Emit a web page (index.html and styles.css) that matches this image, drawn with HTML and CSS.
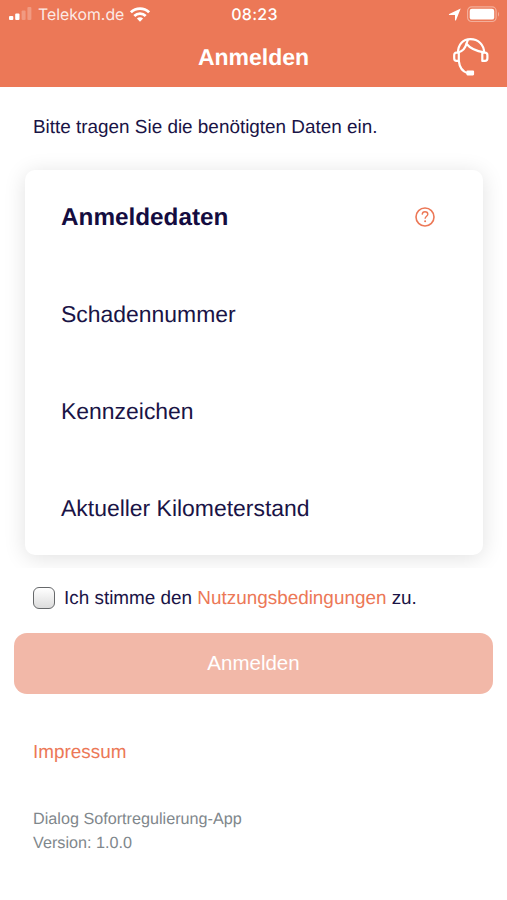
FILE: index.html
```html
<!DOCTYPE html>
<html lang="de">
<head>
    <meta charset="UTF-8">
    <meta name="viewport" content="width=device-width, initial-scale=1">
    <title>Anmelden</title>
    <link rel="stylesheet" href="styles.css">
</head>
<body>
    <header class="header">
        <div class="status">
            <div class="status-left">
                <svg class="signal" width="23" height="14" viewBox="0 0 23 14" fill="#fff">
                    <rect x="0" y="9" width="4.3" height="4" rx="1"/>
                    <rect x="6.2" y="6.5" width="4.3" height="6.5" rx="1"/>
                    <rect x="12.6" y="3.5" width="4" height="9.5" rx="1" opacity=".25"/>
                    <rect x="18.4" y="0" width="4" height="13" rx="1" opacity=".25"/>
                </svg>
                <span class="carrier">Telekom.de</span>
                <svg width="20" height="15" viewBox="0 0 20 15" fill="none" stroke="#fff" stroke-width="2.8">
                    <path d="M.9 5.3a13 13 0 0 1 18.2 0"/>
                    <path d="M4.3 8.9a8.2 8.2 0 0 1 11.4 0"/>
                    <path d="M10 14.7l-3.1-3.2a4.4 4.4 0 0 1 6.2 0z" fill="#fff" stroke="none"/>
                </svg>
            </div>
            <div class="time">08:23</div>
            <div class="status-right">
                <svg width="13" height="13" viewBox="0 0 13 13" fill="#fff">
                    <path d="M12.7.6L8 12.2c-.2.5-1 .4-1-.2V7H1.4C.8 7 .7 6.3 1.2 6z"/>
                </svg>
                <svg width="33" height="17" viewBox="0 0 33 17" fill="none">
                    <rect x=".6" y=".9" width="28.5" height="14.6" rx="4" stroke="#fff" stroke-opacity=".4" stroke-width="1.2"/>
                    <rect x="2.7" y="2.8" width="24.5" height="10.8" rx="2.2" fill="#fff"/>
                    <path d="M31 6v4.6c1.4-.6 1.4-4 0-4.6z" fill="#fff" fill-opacity=".4"/>
                </svg>
            </div>
        </div>
        <div class="navbar">
            <h1 class="title">Anmelden</h1>
            <svg class="support" width="36" height="40" viewBox="0 0 36 40" fill="none" stroke="#fff" stroke-width="2.2" stroke-linejoin="round">
                <path d="M5 16C5 7 10.2 2.2 17.5 2.2S31 7 31.2 16"/>
                <path d="M5.2 15.5c4-1.2 7.2-4.2 8.2-8.7 3.3 4 8.8 7.3 17.6 8.6"/>
                <path d="M13.4 6.8l1.5-4"/>
                <path d="M5.8 15.7H3.5c-1.7 0-2.3 1-2.3 2.5v3c0 1.7.8 2.7 2.4 2.7h2.2z"/>
                <path d="M29.3 15.7h2.5c1.8 0 2.6 1 2.6 2.5v3c0 1.7-.9 2.7-2.5 2.7h-2.6z"/>
                <path d="M5.8 23.9c.7 6.5 3.7 10.8 8.9 12.3"/>
                <path d="M14.5 34.5h5.5v2.8h-5.5z" fill="#fff"/>
            </svg>
        </div>
    </header>

    <main class="content">
        <div class="form-area">
            <p class="intro">Bitte tragen Sie die benötigten Daten ein.</p>
            <section class="card">
                <div class="card-head">
                    <h2 class="card-title">Anmeldedaten</h2>
                    <svg width="20" height="20" viewBox="0 0 20 20" fill="none" stroke="#ec7857" stroke-width="1.6">
                        <circle cx="10" cy="10" r="9"/>
                        <path d="M7.2 7.6C7.3 5.7 8.4 4.8 10 4.8s2.8 1 2.8 2.4c0 2-2.7 2.2-2.7 4.6" stroke-width="1.4"/>
                        <circle cx="10.1" cy="14.3" r="1" fill="#ec7857" stroke="none"/>
                    </svg>
                </div>
                <div class="field">Schadennummer</div>
                <div class="field">Kennzeichen</div>
                <div class="field">Aktueller Kilometerstand</div>
            </section>
        </div>

        <div class="agree">
            <input class="check" type="checkbox" id="agree">
            <label class="agree-text" for="agree">Ich stimme den <a class="link" href="#">Nutzungsbedingungen</a> zu.</label>
        </div>
        <button class="submit" type="button">Anmelden</button>

        <footer class="footer">
            <a class="link" href="#">Impressum</a>
            <div class="version">
                Dialog Sofortregulierung-App<br>
                Version: 1.0.0
            </div>
        </footer>
    </main>
</body>
</html>
```
FILE: styles.css
```css
* {box-sizing: border-box;}
body {
    margin: 0;
    min-height: 900px;
    background: #fff;
    color: #1a1446;
    font-family: "Liberation Sans", Arial, sans-serif;
    font-size: 18.9px;
    text-rendering: geometricPrecision;
}
svg {
    display: block;
    flex: none;
}
.header {
    height: 87px;
    background: #ec7857;
    color: #fff;
}
.status {
    display: grid;
    grid-template-columns: 1fr auto 1fr;
    align-items: center;
    height: 28px;
    padding: 0 7px 0 9px;
    font-family: Inter, sans-serif;
    font-size: 16px;
}
.status-left, .status-right {
    display: flex;
    align-items: center;
}
.status-left {
    gap: 6px;
}
.carrier {
    font-size: 15.8px;
    opacity: .85;
}
.time {
    font-weight: 500;
    letter-spacing: .3px;
}
.status-right {
    justify-content: flex-end;
    gap: 6px;
}
.navbar {
    display: grid;
    grid-template-columns: 1fr auto 1fr;
    align-items: center;
    height: 57px;
    padding: 0 18px;
}
.title {
    grid-column: 2;
    margin: 0;
    padding-top: 2px;
    font-size: 23px;
    line-height: 55px;
}
.support {
    justify-self: end;
}

.form-area {
    height: 481px;
    padding: 29px 24px 0 25px;
    overflow: hidden;
}
.intro {
    margin: 0 0 30px 8px;
    line-height: 24px;
}
.card {
    height: 385px;
    padding: 23px 36px 0;
    border-radius: 10px;
    background: #fff;
    box-shadow: 0 3px 22px rgba(0, 0, 0, .12);
}
.card-head {
    display: flex;
    align-items: center;
    justify-content: space-between;
    height: 48px;
    padding-right: 12px;
}
.card-title {
    margin: 0;
    padding-top: 2px;
    color: #140c40;
    font-size: 24.3px;
}
.field {
    height: 97px;
    padding-top: 34px;
    font-size: 22.95px;
    line-height: 78px;
}

.agree {
    display: flex;
    align-items: center;
    gap: 9px;
    height: 60px;
    padding-left: 33px;
}
.agree-text {
    padding-top: 2px;
}
.check {
    appearance: none;
    width: 22px;
    height: 22px;
    margin: 0;
    border: 1.5px solid #66686a;
    border-radius: 6px;
    background: linear-gradient(#fff, #dcdcdc);
}
.link {
    color: #ec7857;
    text-decoration: none;
}
.submit {
    display: block;
    width: 479px;
    height: 61px;
    margin: 5px 0 0 14px;
    padding: 0 0 1px;
    border: 0;
    border-radius: 13px;
    background: #f2b8a8;
    color: #fff;
    font-family: inherit;
    font-size: 20.5px;
}
.footer {
    padding: 47px 33px 0;
    line-height: 24px;
}
.version {
    margin-top: 42px;
    color: #7f878c;
    font-size: 16.2px;
}
```
